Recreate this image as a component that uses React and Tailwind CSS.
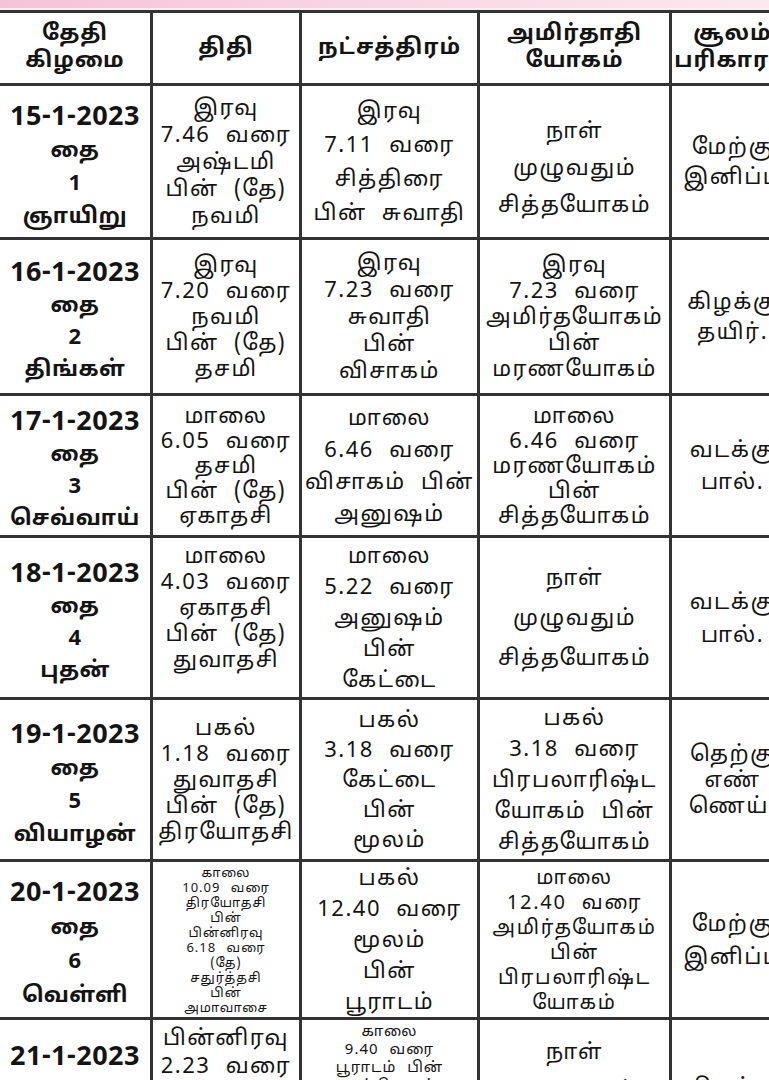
import React from "react";

const font = { fontFamily: '"Noto Sans Tamil", "Lohit Tamil", "Noto Sans", "Liberation Sans", sans-serif' };

const heads = [
  ["தேதி", "கிழமை"],
  ["திதி"],
  ["நட்சத்திரம்"],
  ["அமிர்தாதி", "யோகம்"],
  ["சூலம்", "பரிகாரம்"],
];

const rows = [
  {
    h: "h-[154px]",
    cells: [
      { t: ["15-1-2023", "தை", "1", "ஞாயிறு"], lh: "leading-[33px]" },
      { t: ["இரவு", "7.46 வரை", "அஷ்டமி", "பின் (தே)", "நவமி"], lh: "leading-[27px]" },
      { t: ["இரவு", "7.11 வரை", "சித்திரை", "பின் சுவாதி"], lh: "leading-[34px]" },
      { t: ["நாள்", "முழுவதும்", "சித்தயோகம்"], lh: "leading-[37px]", pt: "pt-4" },
      { t: ["மேற்கு", "இனிப்பு"], lh: "leading-[30px]" },
    ],
  },
  {
    h: "h-[156px]",
    cells: [
      { t: ["16-1-2023", "தை", "2", "திங்கள்"], lh: "leading-[32px]" },
      { t: ["இரவு", "7.20 வரை", "நவமி", "பின் (தே)", "தசமி"], lh: "leading-[26px]" },
      { t: ["இரவு", "7.23 வரை", "சுவாதி", "பின்", "விசாகம்"], lh: "leading-[27px]" },
      { t: ["இரவு", "7.23 வரை", "அமிர்தயோகம்", "பின்", "மரணயோகம்"], lh: "leading-[26px]" },
      { t: ["கிழக்கு", "தயிர்."], lh: "leading-[30px]" },
    ],
  },
  {
    h: "h-[142px]",
    cells: [
      { t: ["17-1-2023", "தை", "3", "செவ்வாய்"], lh: "leading-[32px]" },
      { t: ["மாலை", "6.05 வரை", "தசமி", "பின் (தே)", "ஏகாதசி"], lh: "leading-[25px]" },
      { t: ["மாலை", "6.46 வரை", "விசாகம் பின்", "அனுஷம்"], lh: "leading-[32px]" },
      { t: ["மாலை", "6.46 வரை", "மரணயோகம்", "பின்", "சித்தயோகம்"], lh: "leading-[25px]" },
      { t: ["வடக்கு", "பால்."], lh: "leading-[32px]" },
    ],
  },
  {
    h: "h-[162px]",
    cells: [
      { t: ["18-1-2023", "தை", "4", "புதன்"], lh: "leading-[32px]" },
      { t: ["மாலை", "4.03 வரை", "ஏகாதசி", "பின் (தே)", "துவாதசி"], lh: "leading-[26px]", pt: "pb-4" },
      { t: ["மாலை", "5.22 வரை", "அனுஷம்", "பின்", "கேட்டை"], lh: "leading-[31px]" },
      { t: ["நாள்", "முழுவதும்", "சித்தயோகம்"], lh: "leading-[40px]" },
      { t: ["வடக்கு", "பால்."], lh: "leading-[33px]" },
    ],
  },
  {
    h: "h-[162px]",
    cells: [
      { t: ["19-1-2023", "தை", "5", "வியாழன்"], lh: "leading-[33px]" },
      { t: ["பகல்", "1.18 வரை", "துவாதசி", "பின் (தே)", "திரயோதசி"], lh: "leading-[26px]" },
      { t: ["பகல்", "3.18 வரை", "கேட்டை", "பின்", "மூலம்"], lh: "leading-[30px]" },
      { t: ["பகல்", "3.18 வரை", "பிரபலாரிஷ்ட", "யோகம் பின்", "சித்தயோகம்"], lh: "leading-[31px]" },
      { t: ["தெற்கு", "எண்", "ணெய்."], lh: "leading-[26px]" },
    ],
  },
  {
    h: "h-[158px]",
    cells: [
      { t: ["20-1-2023", "தை", "6", "வெள்ளி"], lh: "leading-[34px]" },
      {
        t: ["காலை", "10.09 வரை", "திரயோதசி", "பின்", "பின்னிரவு", "6.18 வரை", "(தே)", "சதுர்த்தசி", "பின்", "அமாவாசை"],
        lh: "leading-[15px]",
        sz: "text-[13px] tracking-[1px] [word-spacing:6px]",
      },
      { t: ["பகல்", "12.40 வரை", "மூலம்", "பின்", "பூராடம்"], lh: "leading-[31px]" },
      {
        t: ["மாலை", "12.40 வரை", "அமிர்தயோகம்", "பின்", "பிரபலாரிஷ்ட", "யோகம்"],
        lh: "leading-[25px]",
        sz: "text-[20px] tracking-[1.8px] [word-spacing:8px]",
      },
      { t: ["மேற்கு", "இனிப்பு"], lh: "leading-[33px]" },
    ],
  },
  {
    h: "h-[166px]",
    cells: [
      { t: ["21-1-2023", "தை", "7", "சனி"], lh: "leading-[33px]" },
      { t: ["பின்னிரவு", "2.23 வரை", "அமாவாசை", "பின் (தே)", "பிரதமை"], lh: "leading-[28px]", pt: "pb-3" },
      {
        t: ["காலை", "9.40 வரை", "பூராடம் பின்", "உத்திராடம்", "பின்", "திருவோணம்", "வரை"],
        lh: "leading-[18px]",
        sz: "text-[15px] tracking-[1px] [word-spacing:6px]",
        top: true,
      },
      { t: ["நாள்", "முழுவதும்", "சித்தயோகம்"], lh: "leading-[38px]", pt: "pb-5" },
      { t: ["கிழக்கு", "தயிர்."], lh: "leading-[30px]" },
    ],
  },
];

const widths = ["w-[153px]", "w-[149px]", "w-[178px]", "w-[192px]", "w-[124px]"];

function Cell({ col, cell }) {
  const first = col === 0;
  return (
    <div
      className={`${widths[col]} shrink-0 h-full border-r-[3px] border-[#333] flex flex-col items-center text-center ${
        cell.top ? "justify-start pt-1" : "justify-center"
      } ${cell.pt || (first ? "pt-3" : "pt-1")}`}
    >
      {cell.t.map((line, i) => (
        <div
          key={i}
          className={`whitespace-nowrap ${cell.lh} ${
            first
              ? i === 0
                ? "text-[27px] font-bold tracking-[0.5px]"
                : "text-[22px] font-bold tracking-[0.5px]"
              : cell.sz || "text-[22px] tracking-[1.5px] [word-spacing:8px]"
          }`}
        >
          {line}
        </div>
      ))}
    </div>
  );
}

export default function App() {
  return (
    <div className="w-[769px] h-[1080px] overflow-hidden bg-white text-[#141414]" style={font}>
      <div className="h-[8px] bg-gradient-to-r from-[#f6c3d6] via-[#f9d6e3] to-[#fce8ef]"></div>
      <div className="h-[2px] bg-[#f7eef1]"></div>
      <div className="w-[796px] border-t-[3px] border-[#333]">
        <div className="flex h-[73px] border-b-[3px] border-[#333]">
          {heads.map((h, i) => (
            <div
              key={i}
              className={`${widths[i]} shrink-0 h-full border-r-[3px] border-[#333] flex flex-col items-center justify-center text-center font-bold text-[22px] tracking-[1px]`}
            >
              {h.map((line, j) => (
                <div key={j} className="leading-[27px] whitespace-nowrap">
                  {line}
                </div>
              ))}
            </div>
          ))}
        </div>
        {rows.map((r, ri) => (
          <div key={ri} className={`flex ${r.h} border-b-[3px] border-[#333]`}>
            {r.cells.map((c, ci) => (
              <Cell key={ci} col={ci} cell={c} />
            ))}
          </div>
        ))}
      </div>
    </div>
  );
}
